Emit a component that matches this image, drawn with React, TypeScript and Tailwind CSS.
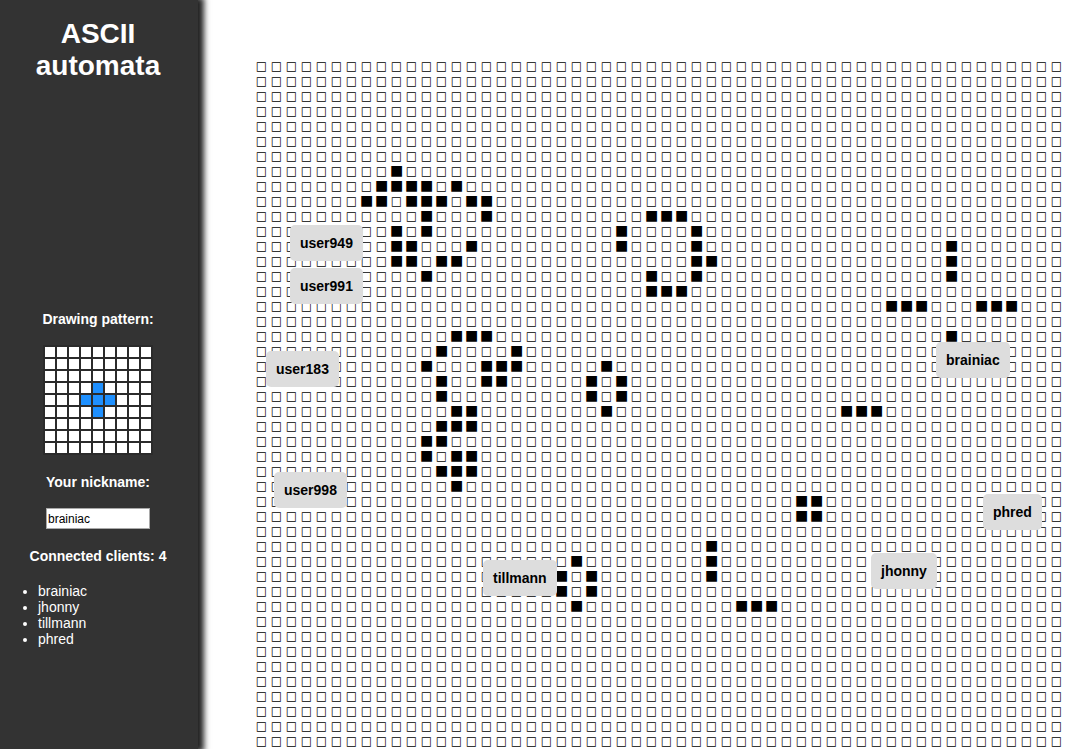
import { useState } from "react";

const ROWS = 46;
const COLUMNS = 54;
const PATTERN_SIZE = 9;

const LIVE_CELLS: Record<number, number[]> = {
  7: [9],
  8: [8, 9, 10, 11, 13],
  9: [7, 8, 10, 11, 12, 14, 15],
  10: [11, 15, 26, 27, 28],
  11: [9, 11, 24, 29],
  12: [9, 10, 14, 24, 29, 46],
  13: [9, 10, 12, 13, 29, 30, 46],
  14: [11, 26, 29, 46],
  15: [26, 27, 28],
  16: [42, 43, 44, 48, 49, 50],
  18: [13, 14, 15, 46],
  19: [12, 17],
  20: [11, 15, 16, 17, 23],
  21: [12, 15, 16, 22, 24],
  22: [12, 22, 24],
  23: [13, 14, 23, 39, 40, 41],
  24: [12, 13, 14],
  25: [11, 12],
  26: [11, 13, 14],
  27: [12, 13, 14],
  28: [13],
  29: [36, 37],
  30: [36, 37],
  32: [30],
  33: [21, 30],
  34: [20, 22, 30],
  35: [20, 22],
  36: [21, 32, 33, 34],
};

const CLIENTS = ["brainiac", "jhonny", "tillmann", "phred"];

const CURSORS = [
  { name: "user949", place: "left-[290px] top-[225px]" },
  { name: "user991", place: "left-[290px] top-[268px]" },
  { name: "user183", place: "left-[266px] top-[351px]" },
  { name: "user998", place: "left-[274px] top-[472px]" },
  { name: "tillmann", place: "left-[483px] top-[560px]" },
  { name: "brainiac", place: "left-[936px] top-[342px]" },
  { name: "phred", place: "left-[983px] top-[494px]" },
  { name: "jhonny", place: "left-[871px] top-[553px]" },
];

function PatternEditor() {
  const [active, setActive] = useState<number[]>([31, 39, 40, 41, 49]);
  const toggle = (index: number) =>
    setActive((cells) =>
      cells.includes(index) ? cells.filter((c) => c !== index) : [...cells, index],
    );

  return (
    <div role="group" aria-labelledby="pattern-title" className="grid grid-cols-9 gap-0.5 bg-[#2b2b2b] p-0.5">
      {Array.from({ length: PATTERN_SIZE * PATTERN_SIZE }, (_, i) => (
        <button
          key={i}
          type="button"
          aria-label={`Row ${Math.floor(i / PATTERN_SIZE) + 1}, column ${(i % PATTERN_SIZE) + 1}`}
          aria-pressed={active.includes(i)}
          onClick={() => toggle(i)}
          className={active.includes(i) ? "size-2.5 bg-[#1e90ff]" : "size-2.5 bg-white"}
        />
      ))}
    </div>
  );
}

function Sidebar() {
  const [nickname, setNickname] = useState("brainiac");

  return (
    <aside className="relative z-10 flex w-[198px] shrink-0 flex-col items-center bg-[#333] pt-[18px] pr-0.5 text-sm leading-4 text-white shadow-[3px_0_6px_3px_#222]">
      <h1 className="w-40 text-center text-[28px] leading-8 font-bold">ASCII automata</h1>
      <h2 id="pattern-title" className="mt-[229px] mb-[18px] font-bold">Drawing pattern:</h2>
      <PatternEditor />
      <label htmlFor="nickname" className="mt-[19px] font-bold">Your nickname:</label>
      <input
        id="nickname"
        value={nickname}
        onChange={(e) => setNickname(e.target.value)}
        className="mt-[18px] h-[21px] w-[104px] border border-[#a9a9a9] bg-white px-px text-xs text-black"
      />
      <h2 className="mt-[19px] font-bold">Connected clients: {CLIENTS.length}</h2>
      <ul className="mt-[19px] w-full list-disc pl-[38px]">
        {CLIENTS.map((name) => (
          <li key={name}>{name}</li>
        ))}
      </ul>
    </aside>
  );
}

function Board() {
  return (
    <main className="min-w-0 flex-1 overflow-hidden pt-[58px] pl-14 font-['DejaVu_Sans',sans-serif] text-black">
      {Array.from({ length: ROWS }, (_, row) => (
        <div key={row} className="flex h-[15px]">
          {Array.from({ length: COLUMNS }, (_, column) =>
            LIVE_CELLS[row]?.includes(column) ? (
              <span key={column} className="w-[15px] shrink-0 text-center text-[14px] leading-[15px]">■</span>
            ) : (
              <span key={column} className="w-[15px] shrink-0 text-center text-[12px] leading-[17px]">□</span>
            ),
          )}
        </div>
      ))}
    </main>
  );
}

export default function App() {
  return (
    <div className="relative flex h-screen overflow-hidden bg-white font-['Liberation_Sans',Arial,sans-serif]">
      <Sidebar />
      <Board />
      {CURSORS.map(({ name, place }) => (
        <div
          key={name}
          className={`absolute rounded-[5px] bg-[#ddd] p-2.5 text-sm leading-4 font-bold text-black ${place}`}
        >
          {name}
        </div>
      ))}
    </div>
  );
}
